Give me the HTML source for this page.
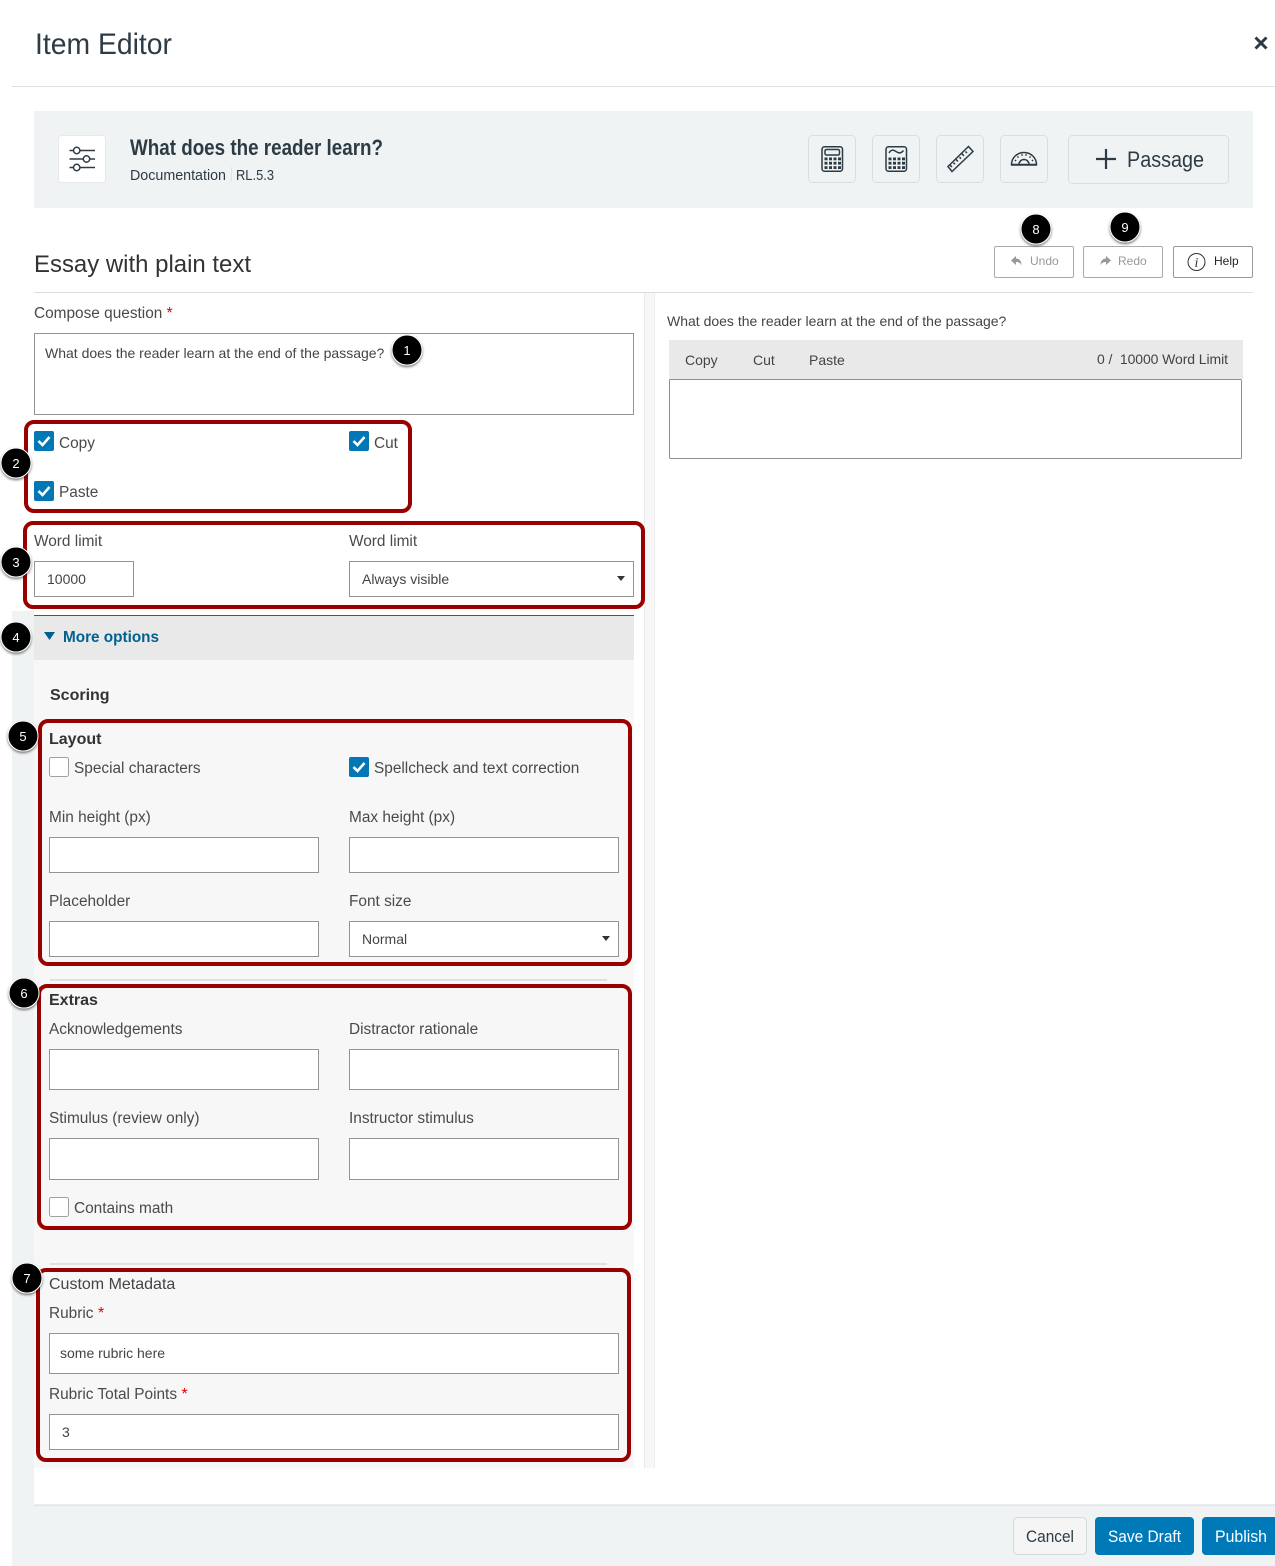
<!DOCTYPE html>
<html><head><meta charset="utf-8"><title>Item Editor</title>
<style>
html,body{margin:0;padding:0;background:#fff;width:1275px;height:1566px;overflow:hidden}
svg{display:block}
text{font-family:"Liberation Sans",sans-serif;font-size:14.5px;fill:#444}
.l{font-size:15.4px;fill:#4a4a4a}
.t{font-size:14px;fill:#444}
.b{font-weight:bold;font-size:16px;fill:#333}
.a{font-size:16px;fill:#e00000}
.in{fill:#fff;stroke:#949494;stroke-width:1}
.red{fill:none;stroke:#990000;stroke-width:4}
.ck{fill:#0277b5}
.ckm{fill:none;stroke:#fff;stroke-width:2.6}
.un{fill:#fff;stroke:#a0a0a0;stroke-width:1}
.ib{fill:none;stroke:#d8dde0;stroke-width:1}
.ic{fill:none;stroke:#2d3b45;stroke-width:1.5}
.d{fill:#2d3b45}
.n{font-size:13px;fill:#fff;text-anchor:middle}
.bd{fill:#000;stroke:#fff;stroke-width:1;filter:url(#sh)}
</style></head><body>
<svg width="1275" height="1566" viewBox="0 0 1275 1566" xmlns="http://www.w3.org/2000/svg">
<defs><filter id="sh" x="-30%" y="-30%" width="160%" height="170%"><feDropShadow dx="0" dy="1.5" stdDeviation="1.2" flood-color="#000" flood-opacity=".55"/></filter></defs>
<rect width="1275" height="1566" fill="#fff"/>

<!-- page strips -->
<rect x="12" y="611" width="22" height="955" fill="#f0f3f4"/>
<rect x="12" y="1505" width="1263" height="61" fill="#f0f3f4"/>
<rect x="34" y="1504.5" width="1241" height="1" fill="#d5dae0"/>

<!-- header -->
<text x="35" y="54" textLength="137" lengthAdjust="spacingAndGlyphs" style="font-size:30px;fill:#2d3b45">Item Editor</text>
<path d="M1255.5 37.5l11 11M1266.5 37.5l-11 11" fill="none" stroke="#2d3b45" stroke-width="3"/>
<rect x="12" y="86" width="1263" height="1" fill="#dcdfe6"/>

<!-- band -->
<rect x="34" y="111" width="1219" height="97" fill="#f0f3f4"/>
<rect x="58.500" y="135.500" width="47" height="47" rx="3" fill="#fff" stroke="#e6eaec"/>
<g class="ic">
<path d="M69.500 150.500h4M80 150.500h15M69.500 159h13.500M90 159h5M69.500 167.500h4M80 167.500h15"/>
<circle cx="76.700" cy="150.500" r="3.200"/><circle cx="86.500" cy="159" r="3.200"/><circle cx="76.700" cy="167.500" r="3.200"/>
</g>
<text x="130" y="155" textLength="253" lengthAdjust="spacingAndGlyphs" style="font-size:22px;font-weight:bold;fill:#2d3b45">What does the reader learn?</text>
<text x="130" y="180" textLength="96" lengthAdjust="spacingAndGlyphs" style="font-size:14.500px;fill:#2d3b45">Documentation</text>
<rect x="231" y="167" width="1" height="15" fill="#dfe3e6"/>
<text x="236" y="180" textLength="38" lengthAdjust="spacingAndGlyphs" style="font-size:14.500px;fill:#2d3b45">RL.5.3</text>

<rect class="ib" x="808.500" y="135.500" width="47" height="47" rx="4"/>
<rect class="ib" x="872.500" y="135.500" width="47" height="47" rx="4"/>
<rect class="ib" x="936.500" y="135.500" width="47" height="47" rx="4"/>
<rect class="ib" x="1000.500" y="135.500" width="47" height="47" rx="4"/>
<rect class="ib" x="1068.500" y="135.500" width="160" height="48" rx="4"/>

<!-- calculator -->
<rect class="ic" x="822" y="146.750" width="20.500" height="24.500" rx="2.500"/>
<rect class="ic" x="825" y="149.500" width="14.500" height="5.500" rx="1.500" stroke-width="1.100"/>
<g class="d">
<rect x="824.500" y="157.500" width="3" height="2.800"/><rect x="829" y="157.500" width="3" height="2.800"/><rect x="833.500" y="157.500" width="3" height="2.800"/><rect x="838" y="157.500" width="3" height="2.800"/>
<rect x="824.500" y="161.800" width="3" height="2.800"/><rect x="829" y="161.800" width="3" height="2.800"/><rect x="833.500" y="161.800" width="3" height="2.800"/><rect x="838" y="161.800" width="3" height="2.800"/>
<rect x="824.500" y="166.200" width="3" height="2.800"/><rect x="829" y="166.200" width="3" height="2.800"/><rect x="833.500" y="166.200" width="3" height="2.800"/><rect x="838" y="166.200" width="3" height="2.800"/>
</g>
<!-- graphing calculator -->
<rect class="ic" x="886" y="146.750" width="20.500" height="24.500" rx="2.500"/>
<path class="ic" d="M889 153c2-3.500 4-3.500 7-1.500s5 2 7.500-1" stroke-width="1.200"/>
<g class="d">
<rect x="888.500" y="157.500" width="3" height="2.800"/><rect x="893" y="157.500" width="3" height="2.800"/><rect x="897.500" y="157.500" width="3" height="2.800"/><rect x="902" y="157.500" width="3" height="2.800"/>
<rect x="888.500" y="161.800" width="3" height="2.800"/><rect x="893" y="161.800" width="3" height="2.800"/><rect x="897.500" y="161.800" width="3" height="2.800"/><rect x="902" y="161.800" width="3" height="2.800"/>
<rect x="888.500" y="166.200" width="3" height="2.800"/><rect x="893" y="166.200" width="3" height="2.800"/><rect x="897.500" y="166.200" width="3" height="2.800"/><rect x="902" y="166.200" width="3" height="2.800"/>
</g>
<!-- ruler -->
<path class="ic" d="M948 166.500l20.500-20 4.500 5-21 20z"/>
<path class="ic" stroke-width="1" d="M952 167l-2-2M955 164.200l-1.500-1.500M958 161.500l-2.500-2.500M961 158.700l-1.500-1.500M964 155.800l-2.500-2.500M967 153l-1.500-1.500"/>
<!-- protractor -->
<path class="ic" d="M1011.500 164.500a12.500 12 0 0 1 25 0z"/>
<path class="ic" stroke-width="1.200" d="M1019 164.500a5 5 0 0 1 10 0"/>
<path d="M1011 165h26" stroke="#2d3b45" stroke-width="1.600"/>
<g class="d"><circle cx="1015.500" cy="160.500" r=".9"/><circle cx="1018" cy="157" r=".9"/><circle cx="1022" cy="155" r=".9"/><circle cx="1026" cy="155" r=".9"/><circle cx="1030" cy="157" r=".9"/><circle cx="1032.500" cy="160.500" r=".9"/></g>
<!-- passage -->
<path d="M1096 159h20M1106 149v20" stroke="#2d3b45" stroke-width="2.200" fill="none"/>
<text x="1127" y="167" textLength="77" lengthAdjust="spacingAndGlyphs" style="font-size:22px;fill:#2d3b45">Passage</text>

<!-- title row -->
<text x="34" y="272" textLength="217" lengthAdjust="spacingAndGlyphs" style="font-size:24px;fill:#333">Essay with plain text</text>
<rect x="34" y="292" width="1219" height="1" fill="#ddd"/>
<rect x="994.500" y="246.500" width="79" height="31" rx="1.500" fill="#fff" stroke="#aaa"/>
<rect x="1083.500" y="246.500" width="79" height="31" rx="1.500" fill="#fff" stroke="#aaa"/>
<rect x="1173.500" y="246.500" width="79" height="31" rx="1.500" fill="#fff" stroke="#999"/>
<path d="M1011 260.500l5-4.500v2.500c3.500 0 5.500 2.500 5.500 7-1-2.500-2.500-3.500-5.500-3.500v3z" fill="#999"/>
<path d="M1111 260.500l-5-4.500v2.500c-3.500 0-5.500 2.500-5.500 7 1-2.500 2.500-3.500 5.500-3.500v3z" fill="#999"/>
<text x="1030" y="265" style="font-size:12px;fill:#999">Undo</text>
<text x="1118" y="265" style="font-size:12px;fill:#999">Redo</text>
<circle cx="1196.500" cy="262" r="8.500" fill="none" stroke="#333" stroke-width="1"/>
<text x="1196.500" y="267" style="font-size:14px;font-family:'Liberation Serif',serif;font-style:italic;fill:#333;text-anchor:middle">i</text>
<text x="1214" y="265" style="font-size:12px;fill:#222">Help</text>

<!-- divider between columns -->
<rect x="645" y="293" width="9" height="1175" fill="#f7f7f7"/>
<rect x="644" y="293" width="1" height="1175" fill="#e8e8e8"/>
<rect x="654" y="293" width="1" height="1175" fill="#eee"/>

<!-- compose -->
<text class="l" x="34" y="318">Compose question</text>
<text class="a" x="166.500" y="318">*</text>
<rect class="in" x="34.500" y="333.500" width="599" height="81"/>
<text class="t" x="45" y="358">What does the reader learn at the end of the passage?</text>

<!-- checkboxes -->
<rect class="ck" x="34" y="431" width="20" height="20" rx="2"/><path class="ckm" d="M38.500 441l4 4 7-8"/>
<text class="l" x="59" y="448">Copy</text>
<rect class="ck" x="349" y="431" width="20" height="20" rx="2"/><path class="ckm" d="M353.500 441l4 4 7-8"/>
<text class="l" x="374" y="448">Cut</text>
<rect class="ck" x="34" y="481" width="20" height="20" rx="2"/><path class="ckm" d="M38.500 491l4 4 7-8"/>
<text class="l" x="59" y="497">Paste</text>

<!-- word limit -->
<text class="l" x="34" y="546">Word limit</text>
<text class="l" x="349" y="546">Word limit</text>
<rect class="in" x="34.500" y="561.500" width="99" height="35"/>
<text class="t" x="47" y="584">10000</text>
<rect class="in" x="349.500" y="561.500" width="284" height="35"/>
<text class="t" x="362" y="584">Always visible</text>
<path d="M617 576h8l-4 5z" fill="#333"/>

<!-- more options -->
<rect x="34" y="660" width="600" height="808" fill="#f7f7f7"/>
<rect x="34" y="615" width="600" height="45" fill="#e9e9e9"/>
<rect x="34" y="615" width="600" height="1" fill="#2b5f7c"/>
<path d="M44 632h11l-5.500 8z" fill="#005f8f"/>
<text x="63" y="642" style="font-size:15.300px;font-weight:bold;fill:#00608f">More options</text>

<text class="b" x="50" y="700">Scoring</text>
<text class="b" x="49" y="744">Layout</text>
<rect class="un" x="49.500" y="757.500" width="19" height="19" rx="2"/>
<text class="l" x="74" y="773">Special characters</text>
<rect class="ck" x="349" y="757" width="20" height="20" rx="2"/><path class="ckm" d="M353.500 767l4 4 7-8"/>
<text class="l" x="374" y="773">Spellcheck and text correction</text>

<text class="l" x="49" y="822">Min height (px)</text>
<text class="l" x="349" y="822">Max height (px)</text>
<rect class="in" x="49.500" y="837.500" width="269" height="35"/>
<rect class="in" x="349.500" y="837.500" width="269" height="35"/>
<text class="l" x="49" y="906">Placeholder</text>
<text class="l" x="349" y="906">Font size</text>
<rect class="in" x="49.500" y="921.500" width="269" height="35"/>
<rect class="in" x="349.500" y="921.500" width="269" height="35"/>
<text class="t" x="362" y="944">Normal</text>
<path d="M602 936h8l-4 5z" fill="#333"/>

<rect x="50" y="979" width="557" height="2" fill="#e0e0e0"/>
<text class="b" x="49" y="1005">Extras</text>
<text class="l" x="49" y="1034">Acknowledgements</text>
<text class="l" x="349" y="1034">Distractor rationale</text>
<rect class="in" x="49.500" y="1049.500" width="269" height="40"/>
<rect class="in" x="349.500" y="1049.500" width="269" height="40"/>
<text class="l" x="49" y="1123">Stimulus (review only)</text>
<text class="l" x="349" y="1123">Instructor stimulus</text>
<rect class="in" x="49.500" y="1138.500" width="269" height="41"/>
<rect class="in" x="349.500" y="1138.500" width="269" height="41"/>
<rect class="un" x="49.500" y="1197.500" width="19" height="19" rx="2"/>
<text class="l" x="74" y="1213">Contains math</text>

<rect x="50" y="1263" width="557" height="2" fill="#e0e0e0"/>
<text x="49" y="1289" style="font-size:16px;fill:#444">Custom Metadata</text>
<text class="l" x="49" y="1318">Rubric</text>
<text class="a" x="98" y="1318">*</text>
<rect class="in" x="49.500" y="1333.500" width="569" height="40"/>
<text class="t" x="60" y="1358">some rubric here</text>
<text class="l" x="49" y="1399">Rubric Total Points</text>
<text class="a" x="181.500" y="1399">*</text>
<rect class="in" x="49.500" y="1414.500" width="569" height="35"/>
<text class="t" x="62" y="1437">3</text>

<!-- right preview -->
<text class="t" x="667" y="326">What does the reader learn at the end of the passage?</text>
<rect x="669" y="340" width="574" height="39" fill="#e9e9e9"/>
<text class="t" x="685" y="365">Copy</text>
<text class="t" x="753" y="365">Cut</text>
<text class="t" x="809" y="365">Paste</text>
<text class="t" x="1097" y="364" xml:space="preserve" textLength="131">0 /  10000 Word Limit</text>
<rect x="669.500" y="379.500" width="572" height="79" rx="1" fill="#fff" stroke="#8f8f8f"/>

<!-- footer -->
<rect x="1013.500" y="1517.500" width="73" height="37" rx="4" fill="#f5f5f5" stroke="#d5dadd"/>
<text x="1026" y="1542" textLength="48" lengthAdjust="spacingAndGlyphs" style="font-size:16.500px;fill:#2d3b45">Cancel</text>
<rect x="1095" y="1517" width="99" height="38" rx="4" fill="#0079b8"/>
<text x="1108" y="1542" textLength="73" lengthAdjust="spacingAndGlyphs" style="font-size:16.500px;fill:#fff">Save Draft</text>
<rect x="1202" y="1517" width="80" height="38" rx="4" fill="#0079b8"/>
<text x="1215" y="1542" textLength="52" lengthAdjust="spacingAndGlyphs" style="font-size:16.500px;fill:#fff">Publish</text>

<!-- red annotation boxes -->
<rect class="red" x="26" y="422" width="384" height="89" rx="8"/>
<rect class="red" x="25" y="523" width="618" height="84" rx="8"/>
<rect class="red" x="40" y="721" width="590" height="243" rx="8"/>
<rect class="red" x="39" y="986" width="591" height="242" rx="8"/>
<rect class="red" x="38" y="1270" width="591" height="190" rx="8"/>

<!-- number badges -->
<circle class="bd" cx="407" cy="350" r="15"/><text class="n" x="407" y="355">1</text>
<circle class="bd" cx="16" cy="463" r="15"/><text class="n" x="16" y="468">2</text>
<circle class="bd" cx="16" cy="562" r="15"/><text class="n" x="16" y="567">3</text>
<circle class="bd" cx="16" cy="637" r="15"/><text class="n" x="16" y="642">4</text>
<circle class="bd" cx="23" cy="736" r="15"/><text class="n" x="23" y="741">5</text>
<circle class="bd" cx="24" cy="993" r="15"/><text class="n" x="24" y="998">6</text>
<circle class="bd" cx="27" cy="1278" r="15"/><text class="n" x="27" y="1283">7</text>
<circle class="bd" cx="1036" cy="229" r="15"/><text class="n" x="1036" y="234">8</text>
<circle class="bd" cx="1125" cy="227" r="15"/><text class="n" x="1125" y="232">9</text>
</svg>
</body></html>
